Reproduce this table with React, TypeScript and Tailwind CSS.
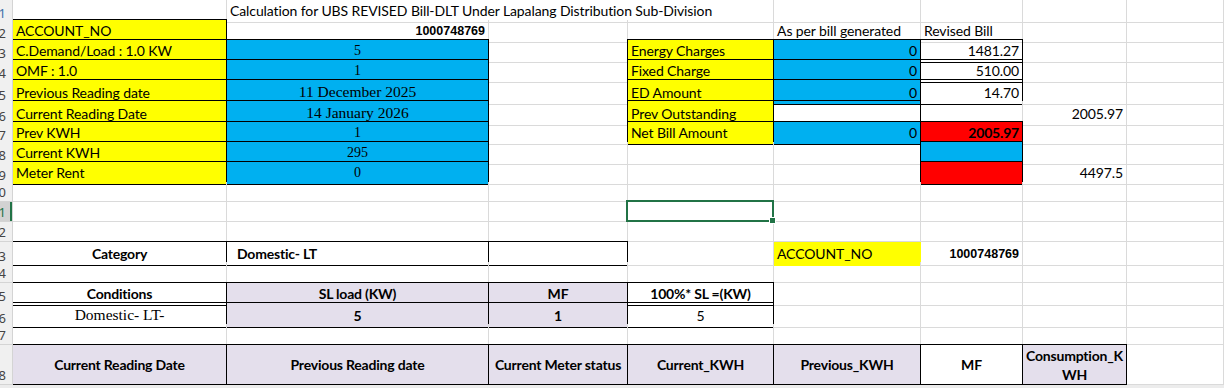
import React from 'react'

type Cell = {
    t?: React.ReactNode
    span?: number
    bg?: string
    box?: boolean
    al?: 'l' | 'c' | 'r'
    f?: 'cal' | 'calb' | 'tnr' | 'tnrL' | 'arb'
    extra?: string
    sel?: boolean
}

type Row = { n: string; h: string; mid?: boolean; cells: Record<string, Cell> }

const COLS = ['A', 'B', 'C', 'D', 'E', 'F', 'G', 'H']

const FONT: Record<string, string> = {
    cal: "font-['Lato',sans-serif] text-[14px] tracking-[-0.1px]",
    calb: "font-['Lato',sans-serif] text-[14px] font-bold tracking-[-0.2px]",
    tnr: "font-['Liberation_Serif',serif] text-[14px]",
    tnrL: "font-['Liberation_Serif',serif] text-[15.5px]",
    arb: "font-['Liberation_Sans',sans-serif] text-[12.5px] font-bold text-[#2f3b4c]",
}

const ALIGN = { l: 'justify-start', c: 'justify-center text-center', r: 'justify-end text-right' }

const Y = 'bg-[#ffff00]'
const BL = 'bg-[#00b0f0]'
const RD = 'bg-[#ff0000]'
const LV = 'bg-[#e4dfec]'

const rows: Row[] = [
    { n: '1', h: 'h-[20px]', cells: { B: { span: 3, t: 'Calculation for UBS REVISED Bill-DLT Under Lapalang Distribution Sub-Division' } } },
    {
        n: '2', h: 'h-[20px]', cells: {
            A: { t: 'ACCOUNT_NO', bg: Y, box: true },
            B: { t: '1000748769', f: 'arb', al: 'r' },
            E: { t: 'As per bill generated' },
            F: { t: 'Revised Bill' },
        },
    },
    {
        n: '3', h: 'h-[20px]', cells: {
            A: { t: 'C.Demand/Load : 1.0 KW', bg: Y, box: true },
            B: { t: '5', bg: BL, box: true, f: 'tnr', al: 'c' },
            D: { t: 'Energy Charges', bg: Y, box: true },
            E: { t: '0', bg: BL, box: true, al: 'r' },
            F: { t: '1481.27', box: true, al: 'r' },
        },
    },
    {
        n: '4', h: 'h-[20px]', cells: {
            A: { t: 'OMF : 1.0', bg: Y, box: true },
            B: { t: '1', bg: BL, box: true, f: 'tnr', al: 'c' },
            D: { t: 'Fixed Charge', bg: Y, box: true },
            E: { t: '0', bg: BL, box: true, al: 'r' },
            F: { t: '510.00', box: true, al: 'r' },
        },
    },
    {
        n: '5', h: 'h-[21px]', cells: {
            A: { t: 'Previous Reading date', bg: Y, box: true },
            B: { t: '11 December 2025', bg: BL, box: true, f: 'tnrL', al: 'c' },
            D: { t: 'ED Amount', bg: Y, box: true },
            E: { t: '0', bg: BL, box: true, al: 'r' },
            F: { t: '14.70', box: true, al: 'r' },
        },
    },
    {
        n: '6', h: 'h-[21px]', cells: {
            A: { t: 'Current Reading Date', bg: Y, box: true },
            B: { t: '14 January 2026', bg: BL, box: true, f: 'tnrL', al: 'c' },
            D: { t: 'Prev Outstanding', bg: Y, box: true },
            E: { box: true },
            G: { t: '2005.97', al: 'r' },
        },
    },
    {
        n: '7', h: 'h-[20px]', cells: {
            A: { t: 'Prev KWH', bg: Y, box: true },
            B: { t: '1', bg: BL, box: true, f: 'tnr', al: 'c' },
            D: { t: 'Net Bill Amount', bg: Y, box: true },
            E: { t: '0', bg: BL, box: true, al: 'r' },
            F: { t: '2005.97', bg: RD, box: true, al: 'r', f: 'calb' },
        },
    },
    {
        n: '8', h: 'h-[20px]', cells: {
            A: { t: 'Current KWH', bg: Y, box: true },
            B: { t: '295', bg: BL, box: true, f: 'tnr', al: 'c' },
            F: { bg: BL, box: true },
        },
    },
    {
        n: '9', h: 'h-[20px]', cells: {
            A: { t: 'Meter Rent', bg: Y, box: true },
            B: { t: '0', bg: BL, box: true, f: 'tnr', al: 'c' },
            F: { bg: RD, box: true },
            G: { t: '4497.5', al: 'r' },
        },
    },
    { n: '10', h: 'h-[20px]', cells: {} },
    { n: '11', h: 'h-[20px]', cells: { D: { sel: true } } },
    { n: '12', h: 'h-[20px]', cells: {} },
    {
        n: '13', h: 'h-[20px]', cells: {
            A: { t: 'Category', box: true, f: 'calb', al: 'c' },
            B: { t: 'Domestic- LT', box: true, f: 'calb', extra: 'pl-[10px] !items-start pt-[1px]' },
            C: { box: true },
            E: { t: 'ACCOUNT_NO', bg: Y, extra: 'border-[#ffff00]' },
            F: { t: '1000748769', f: 'arb', al: 'r' },
        },
    },
    { n: '14', h: 'h-[21px]', cells: {} },
    {
        n: '15', h: 'h-[20px]', cells: {
            A: { t: 'Conditions', box: true, f: 'calb', al: 'c' },
            B: { t: 'SL load (KW)', bg: LV, box: true, f: 'calb', al: 'c' },
            C: { t: 'MF', bg: LV, box: true, f: 'calb', al: 'c' },
            D: { t: '100%* SL =(KW)', box: true, f: 'calb', al: 'c' },
        },
    },
    {
        n: '16', h: 'h-[21px]', cells: {
            A: { t: 'Domestic- LT-', box: true, f: 'tnrL', al: 'c' },
            B: { t: '5', bg: LV, box: true, f: 'calb', al: 'c' },
            C: { t: '1', bg: LV, box: true, f: 'calb', al: 'c' },
            D: { t: '5', box: true, al: 'c' },
        },
    },
    { n: '17', h: 'h-[21px]', cells: {} },
    {
        n: '18', h: 'h-[40px]', mid: true, cells: {
            A: { t: 'Current Reading Date', bg: LV, box: true, f: 'calb', al: 'c' },
            B: { t: 'Previous Reading date', bg: LV, box: true, f: 'calb', al: 'c' },
            C: { t: 'Current Meter status', bg: LV, box: true, f: 'calb', al: 'c' },
            D: { t: 'Current_KWH', bg: LV, box: true, f: 'calb', al: 'c' },
            E: { t: 'Previous_KWH', bg: LV, box: true, f: 'calb', al: 'c' },
            F: { t: 'MF', box: true, f: 'calb', al: 'c' },
            G: {
                t: (
                    <span className="leading-[19px]">
                        Consumption_K
                        <br />
                        WH
                    </span>
                ),
                bg: LV, box: true, f: 'calb', al: 'c',
            },
        },
    },
]

function SheetRow({ row }: { row: Row }) {
    const selRow = row.n === '11'
    const out: React.ReactNode[] = []
    for (let i = 0; i < COLS.length; i++) {
        const key = COLS[i]
        const c = row.cells[key] || {}
        const span = c.span || 1
        const first = i === 0
        const spanCls = span === 3 ? 'col-span-3' : ''
        const border = c.box
            ? first
                ? 'border-black shadow-[0_-1px_0_0_#000]'
                : 'border-black shadow-[-1px_0_0_0_#000,0_-1px_0_0_#000,-1px_-1px_0_0_#000]'
            : 'border-[#dadada]'
        out.push(
            <div
                key={key}
                className={`relative flex min-w-0 whitespace-nowrap border-r border-b px-[3px] text-black ${
                    row.mid ? 'items-center' : 'items-end pb-[1px]'
                } ${spanCls} ${border} ${c.bg || ''} ${FONT[c.f || 'cal']} ${ALIGN[c.al || 'l']} ${c.extra || ''}`}
            >
                {c.t}
                {c.sel && (
                    <div className="absolute left-[-2px] top-[-2px] right-[-1px] bottom-[-1px] z-10 border-2 border-[#217346]">
                        <div className="absolute right-[-4px] bottom-[-4px] h-[7px] w-[7px] border border-white bg-[#217346]" />
                    </div>
                )}
            </div>,
        )
        i += span - 1
    }
    return (
        <div className={`grid grid-cols-[13px_214px_262px_139px_146px_147px_102px_104px_1fr] ${row.h}`}>
            <div
                className={`flex items-end justify-end overflow-hidden border-r border-b border-[#d4d4d4] pr-[6px] font-['Noto_Sans',sans-serif] text-[13px] leading-[18px] ${
                    selRow ? 'bg-[#d2d2d2] text-[#217346] shadow-[inset_-2px_0_0_#217346]' : row.n === '1' ? 'bg-[#f0f0f0] text-[#3b6fa8]' : 'bg-[#f0f0f0] text-[#444]'
                }`}
            >
                {row.n}
            </div>
            {out}
        </div>
    )
}

export default function App() {
    return (
        <div className="flex h-[388px] w-[1224px] flex-col overflow-hidden bg-white">
            {rows.map((r) => (
                <SheetRow key={r.n} row={r} />
            ))}
            <div className="flex-1 bg-[#ececec]" />
        </div>
    )
}
